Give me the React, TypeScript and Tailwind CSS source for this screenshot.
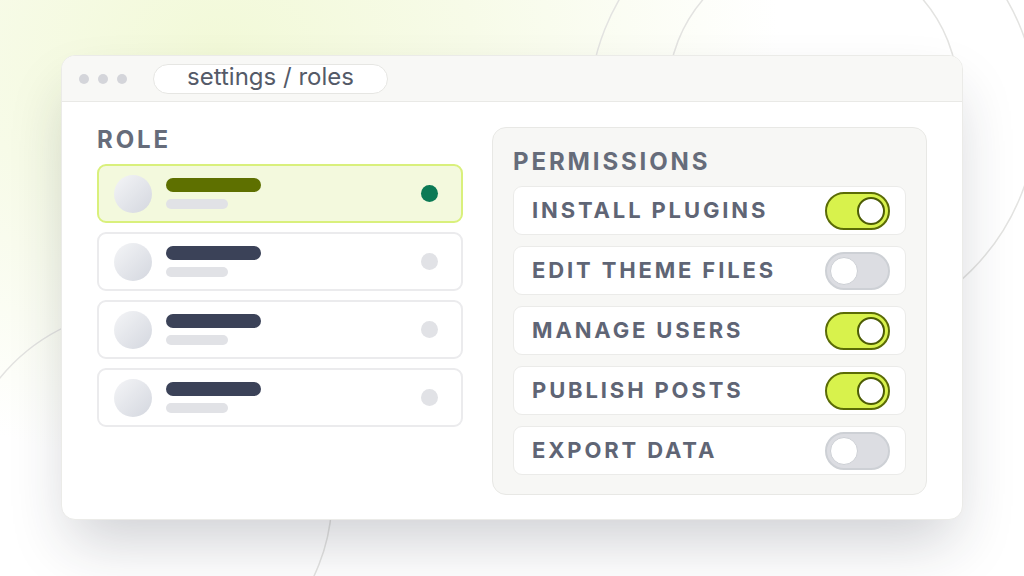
import React from 'react';

interface Role {
  id: string;
  selected: boolean;
}

interface Permission {
  label: string;
  enabled: boolean;
}

const roles: Role[] = [
  { id: 'admin', selected: true },
  { id: 'editor', selected: false },
  { id: 'author', selected: false },
  { id: 'viewer', selected: false },
];

const permissions: Permission[] = [
  { label: 'INSTALL PLUGINS', enabled: true },
  { label: 'EDIT THEME FILES', enabled: false },
  { label: 'MANAGE USERS', enabled: true },
  { label: 'PUBLISH POSTS', enabled: true },
  { label: 'EXPORT DATA', enabled: false },
];

const Toggle = ({ on }: { on: boolean }): JSX.Element => (
  <div
    className={
      on
        ? 'w-[65px] h-[38px] rounded-full border-2 border-[#5b6c06] bg-[#d8f24c] flex items-center justify-end px-[3px]'
        : 'w-[65px] h-[38px] rounded-full border-2 border-[#cdd0d5] bg-[#dcdde2] flex items-center justify-start px-[3px]'
    }
  >
    <div
      className={
        on
          ? 'w-[28px] h-[28px] rounded-full bg-white border-2 border-[#4d5c05]'
          : 'w-[28px] h-[28px] rounded-full bg-white border border-[#cdd0d5]'
      }
    />
  </div>
);

const RoleRow = ({ role }: { role: Role }): JSX.Element => (
  <div
    className={
      role.selected
        ? 'h-[59px] rounded-[9px] border-2 border-[#d9f07c] bg-[#f3f9dd] flex items-center pl-[15px] pr-[23px]'
        : 'h-[59px] rounded-[9px] border-2 border-[#ebebed] bg-white flex items-center pl-[15px] pr-[23px]'
    }
  >
    {/* avatar */}
    <div className="w-[38px] h-[38px] rounded-full bg-gradient-to-br from-[#f4f5f7] to-[#d4d7df]" />
    <div className="ml-[14px] flex flex-col gap-[7px]">
      <div
        className={
          role.selected
            ? 'w-[95px] h-[14px] rounded-full bg-[#5e7000]'
            : 'w-[95px] h-[14px] rounded-full bg-[#3b4258]'
        }
      />
      <div className="w-[62px] h-[10px] rounded-full bg-[#e1e2e6]" />
    </div>
    <div
      className={
        role.selected
          ? 'ml-auto w-[17px] h-[17px] rounded-full bg-[#0b7a55]'
          : 'ml-auto w-[17px] h-[17px] rounded-full bg-[#e1e2e6]'
      }
    />
  </div>
);

export default function App(): JSX.Element {
  return (
    <div className="relative w-[1024px] h-[576px] overflow-hidden bg-white font-['Inter',sans-serif]">
      {/* background glow */}
      <div className="absolute inset-0 bg-[radial-gradient(ellipse_560px_420px_at_220px_50px,#f2f9d8_0%,#f7fbe8_45%,rgba(255,255,255,0)_100%)]" />
      {/* decorative rings */}
      <svg className="absolute inset-0" width="1024" height="576" viewBox="0 0 1024 576" fill="none">
        <circle cx="813" cy="112" r="224" stroke="#e3e3e1" strokeWidth="1.5" />
        <circle cx="813" cy="94" r="145" stroke="#e3e3e1" strokeWidth="1.5" />
        <circle cx="145" cy="496" r="187" stroke="#e3e3e1" strokeWidth="1.5" />
      </svg>

      <div className="relative pt-[55px] pl-[61px]">
        <div className="w-[902px] h-[465px] rounded-[14px] border border-[#ebebe8] bg-white shadow-[0_30px_60px_-10px_rgba(30,35,55,0.22)] flex flex-col overflow-hidden">
          {/* title bar */}
          <div className="h-[46px] shrink-0 bg-[#f8f8f6] border-b border-[#e9e9e6] flex items-center pl-[17px]">
            <div className="flex gap-[9px]">
              <div className="w-[10px] h-[10px] rounded-full bg-[#d4d5da]" />
              <div className="w-[10px] h-[10px] rounded-full bg-[#d4d5da]" />
              <div className="w-[10px] h-[10px] rounded-full bg-[#d4d5da]" />
            </div>
            <div className="ml-[26px] w-[235px] h-[30px] rounded-full border border-[#e6e6e3] bg-white flex items-center justify-center text-[24px] leading-none text-[#545a68] pb-[3px]">
              settings / roles
            </div>
          </div>

          {/* content */}
          <div className="flex gap-[29px] px-[35px] pt-[24px]">
            <div className="w-[367px] flex flex-col">
              <div className="text-[24px] leading-[28px] font-bold tracking-[0.12em] text-[#666c7a] mb-[10px]">ROLE</div>
              <div className="flex flex-col gap-[9px]">
                {roles.map(role => (
                  <RoleRow key={role.id} role={role} />
                ))}
              </div>
            </div>

            <div className="w-[436px] h-[368px] mt-px rounded-[14px] border border-[#e8e8e5] bg-[#f7f7f5] px-[20px] pt-[20px]">
              <div className="text-[24px] leading-[28px] font-bold tracking-[0.12em] text-[#666c7a] mb-[10px]">PERMISSIONS</div>
              <div className="flex flex-col gap-[11px]">
                {permissions.map(p => (
                  <div
                    key={p.label}
                    className="h-[49px] rounded-[9px] border border-[#ebebe9] bg-white flex items-center pl-[18px] pr-[15px]"
                  >
                    <span className="text-[22px] font-bold tracking-[0.13em] text-[#5f6575]">{p.label}</span>
                    <div className="ml-auto">
                      <Toggle on={p.enabled} />
                    </div>
                  </div>
                ))}
              </div>
            </div>
          </div>
        </div>
      </div>
    </div>
  );
}
